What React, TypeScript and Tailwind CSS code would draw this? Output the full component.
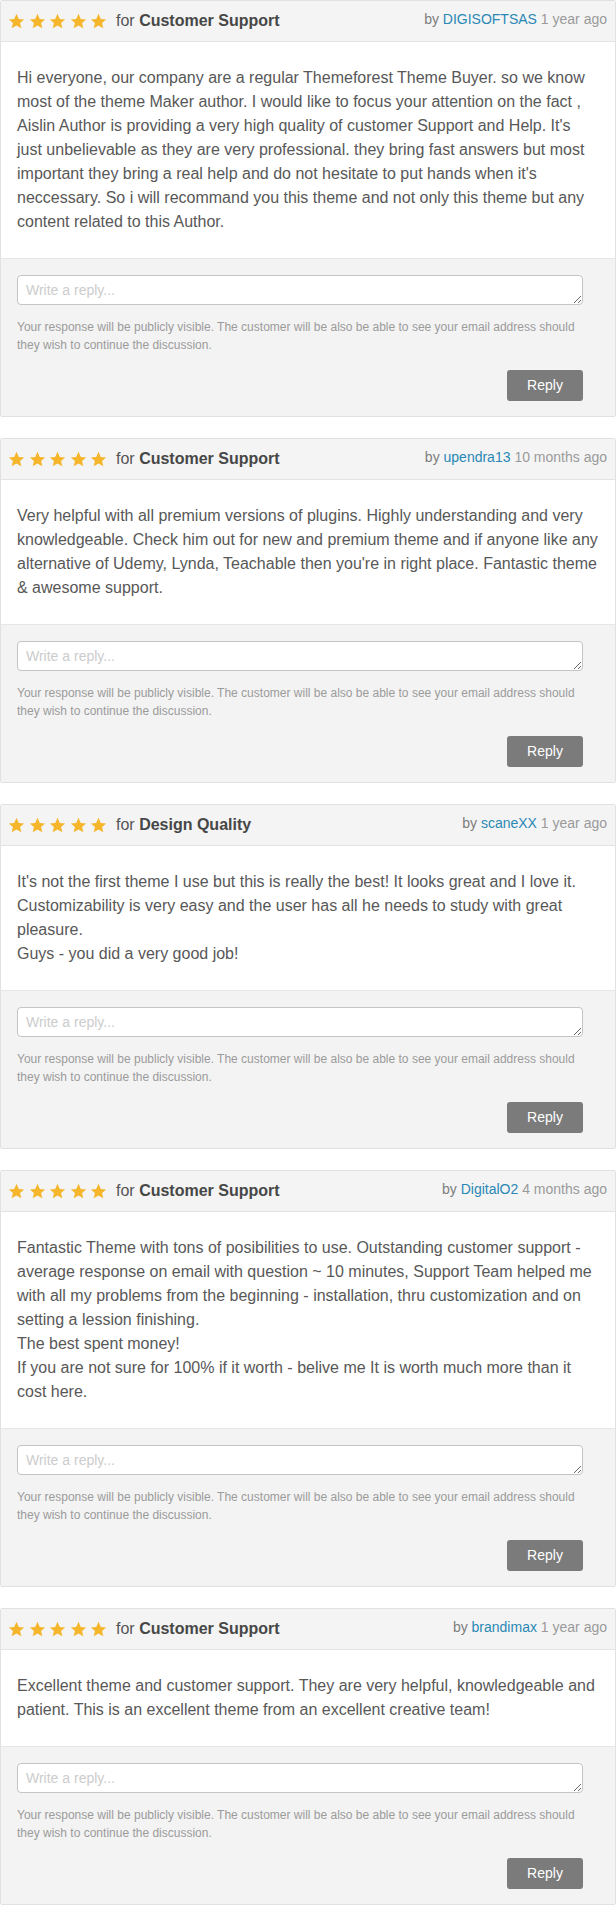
import React from "react";

type Review = {
  category: string;
  user: string;
  time: string;
  text: string;
};

const reviews: Review[] = [
  {
    category: "Customer Support",
    user: "DIGISOFTSAS",
    time: "1 year ago",
    text: "Hi everyone, our company are a regular Themeforest Theme Buyer. so we know most of the theme Maker author. I would like to focus your attention on the fact , Aislin Author is providing a very high quality of customer Support and Help. It's just unbelievable as they are very professional. they bring fast answers but most important they bring a real help and do not hesitate to put hands when it's neccessary. So i will recommand you this theme and not only this theme but any content related to this Author.",
  },
  {
    category: "Customer Support",
    user: "upendra13",
    time: "10 months ago",
    text: "Very helpful with all premium versions of plugins. Highly understanding and very knowledgeable. Check him out for new and premium theme and if anyone like any alternative of Udemy, Lynda, Teachable then you're in right place. Fantastic theme & awesome support.",
  },
  {
    category: "Design Quality",
    user: "scaneXX",
    time: "1 year ago",
    text: "It's not the first theme I use but this is really the best! It looks great and I love it. Customizability is very easy and the user has all he needs to study with great pleasure.\nGuys - you did a very good job!",
  },
  {
    category: "Customer Support",
    user: "DigitalO2",
    time: "4 months ago",
    text: "Fantastic Theme with tons of posibilities to use. Outstanding customer support - average response on email with question ~ 10 minutes, Support Team helped me with all my problems from the beginning - installation, thru customization and on setting a lession finishing.\nThe best spent money!\nIf you are not sure for 100% if it worth - belive me It is worth much more than it cost here.",
  },
  {
    category: "Customer Support",
    user: "brandimax",
    time: "1 year ago",
    text: "Excellent theme and customer support. They are very helpful, knowledgeable and patient. This is an excellent theme from an excellent creative team!",
  },
];

function Star() {
  return (
    <svg viewBox="0 0 24 24" className="w-[17px] h-[17px] block" aria-hidden="true">
      <path
        d="M12 1.2l3.2 7.1 7.6.7-5.8 5.1 1.8 7.6L12 17.7l-6.8 4 1.8-7.6L1.2 9l7.6-.7z"
        fill="#f5b62c"
      />
    </svg>
  );
}

function ReviewCard({ r }: { r: Review }) {
  return (
    <div className="border border-[#e1e1e1] rounded-[2px] bg-white">
      <div className="h-[41px] bg-[#f4f4f4] border-b border-[#e3e3e3] flex items-center justify-between pl-[7px] pr-[8px]">
        <div className="flex items-center">
          <div className="flex items-center gap-[3.5px] pt-[1px]">
            <Star />
            <Star />
            <Star />
            <Star />
            <Star />
          </div>
          <span className="ml-[9px] text-[16px] text-[#555555]">
            for <span className="font-bold text-[#474747]">{r.category}</span>
          </span>
        </div>
        <div className="text-[14px] text-[#7d7d7d] pb-[3px]">
          by <span className="text-[#2a88b5]">{r.user}</span>{" "}
          <span className="text-[#9a9a9a]">{r.time}</span>
        </div>
      </div>
      <div className="px-4 py-6 text-[16px] leading-[24px] text-[#585858] whitespace-pre-line border-b border-[#e6e6e6]">
        {r.text}
      </div>
      <div className="bg-[#f3f3f3] pl-4 pr-8 pt-4 pb-[15px]">
        <textarea
          placeholder="Write a reply..."
          className="block w-full h-[30px] bg-white border border-[#c4c4c4] rounded-[4px] px-2 py-[5px] text-[14px] leading-[18px] text-[#555] placeholder:text-[#cccccc] outline-none"
        />
        <p className="mt-[13px] text-[12px] leading-[18px] text-[#9b9b9b]">
          Your response will be publicly visible. The customer will be also be able to see your email address should they wish to continue the discussion.
        </p>
        <div className="mt-4 flex justify-end">
          <button className="w-[76px] h-[31px] bg-[#7b7b7b] text-white text-[14px] rounded-[3px]">
            Reply
          </button>
        </div>
      </div>
    </div>
  );
}

export default function App() {
  return (
    <div
      className="w-[616px] bg-white flex flex-col gap-[21px]"
      style={{ fontFamily: '"Liberation Sans", Arial, sans-serif' }}
    >
      {reviews.map((r, i) => (
        <ReviewCard key={i} r={r} />
      ))}
    </div>
  );
}
